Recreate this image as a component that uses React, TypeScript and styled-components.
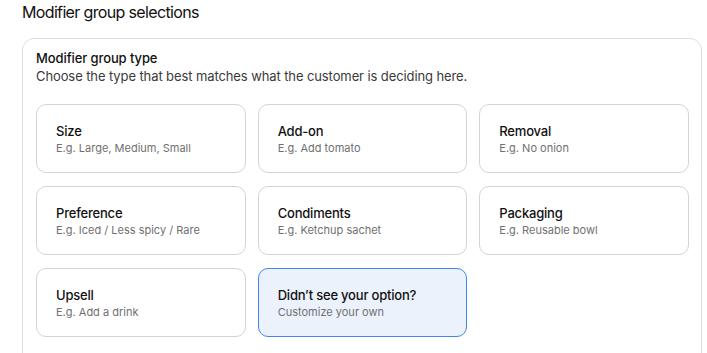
import React from "react";
import styled, { createGlobalStyle } from "styled-components";

const GlobalStyle = createGlobalStyle`
  body {
    margin: 0;
    background: #ffffff;
    font-family: Inter, "Noto Sans", sans-serif;
    color: #111111;
  }
`;

const Page = styled.div`
  padding: 1px 5px 0 22px;
`;

const Heading = styled.h2`
  margin: 0 0 15px;
  font-size: 16px;
  line-height: 22px;
  font-weight: 400;
  letter-spacing: -0.65px;
  color: #111111;
`;

const Card = styled.section`
  border: 1px solid #dedede;
  border-radius: 12px;
  padding: 10px 12px 40px 13px;
`;

const CardTitle = styled.div`
  font-size: 13px;
  line-height: 18px;
  font-weight: 500;
  letter-spacing: -0.1px;
  color: #111111;
`;

const CardHint = styled.div`
  font-size: 13px;
  line-height: 18px;
  letter-spacing: -0.1px;
  color: #3a3a3a;
  margin-bottom: 19px;
`;

const Grid = styled.div`
  display: grid;
  grid-template-columns: repeat(3, 1fr);
  column-gap: 12px;
  row-gap: 13px;
`;

const Tile = styled.button<{ $selected?: boolean }>`
  height: 69px;
  display: flex;
  flex-direction: column;
  justify-content: center;
  gap: 2px;
  padding: 1px 19px 0;
  text-align: left;
  font-family: inherit;
  border-radius: 10px;
  border: 1px solid ${(p) => (p.$selected ? "#3f87f0" : "#d4d4d4")};
  background: ${(p) => (p.$selected ? "#ebf2fc" : "#ffffff")};
  cursor: pointer;
`;

const TileTitle = styled.span`
  font-size: 13px;
  line-height: 16px;
  font-weight: 500;
  letter-spacing: -0.2px;
  color: #111111;
`;

const TileHint = styled.span`
  font-size: 11px;
  line-height: 15px;
  color: #707070;
`;

const options = [
  { title: "Size", hint: "E.g. Large, Medium, Small" },
  { title: "Add-on", hint: "E.g. Add tomato" },
  { title: "Removal", hint: "E.g. No onion" },
  { title: "Preference", hint: "E.g. Iced / Less spicy / Rare" },
  { title: "Condiments", hint: "E.g. Ketchup sachet" },
  { title: "Packaging", hint: "E.g. Reusable bowl" },
  { title: "Upsell", hint: "E.g. Add a drink" },
  { title: "Didn’t see your option?", hint: "Customize your own", selected: true },
];

export default function App() {
  return (
    <>
      <GlobalStyle />
      <Page>
        <Heading>Modifier group selections</Heading>
        <Card>
          <CardTitle>Modifier group type</CardTitle>
          <CardHint>Choose the type that best matches what the customer is deciding here.</CardHint>
          <Grid>
            {options.map((o) => (
              <Tile key={o.title} $selected={o.selected}>
                <TileTitle>{o.title}</TileTitle>
                <TileHint>{o.hint}</TileHint>
              </Tile>
            ))}
          </Grid>
        </Card>
      </Page>
    </>
  );
}
